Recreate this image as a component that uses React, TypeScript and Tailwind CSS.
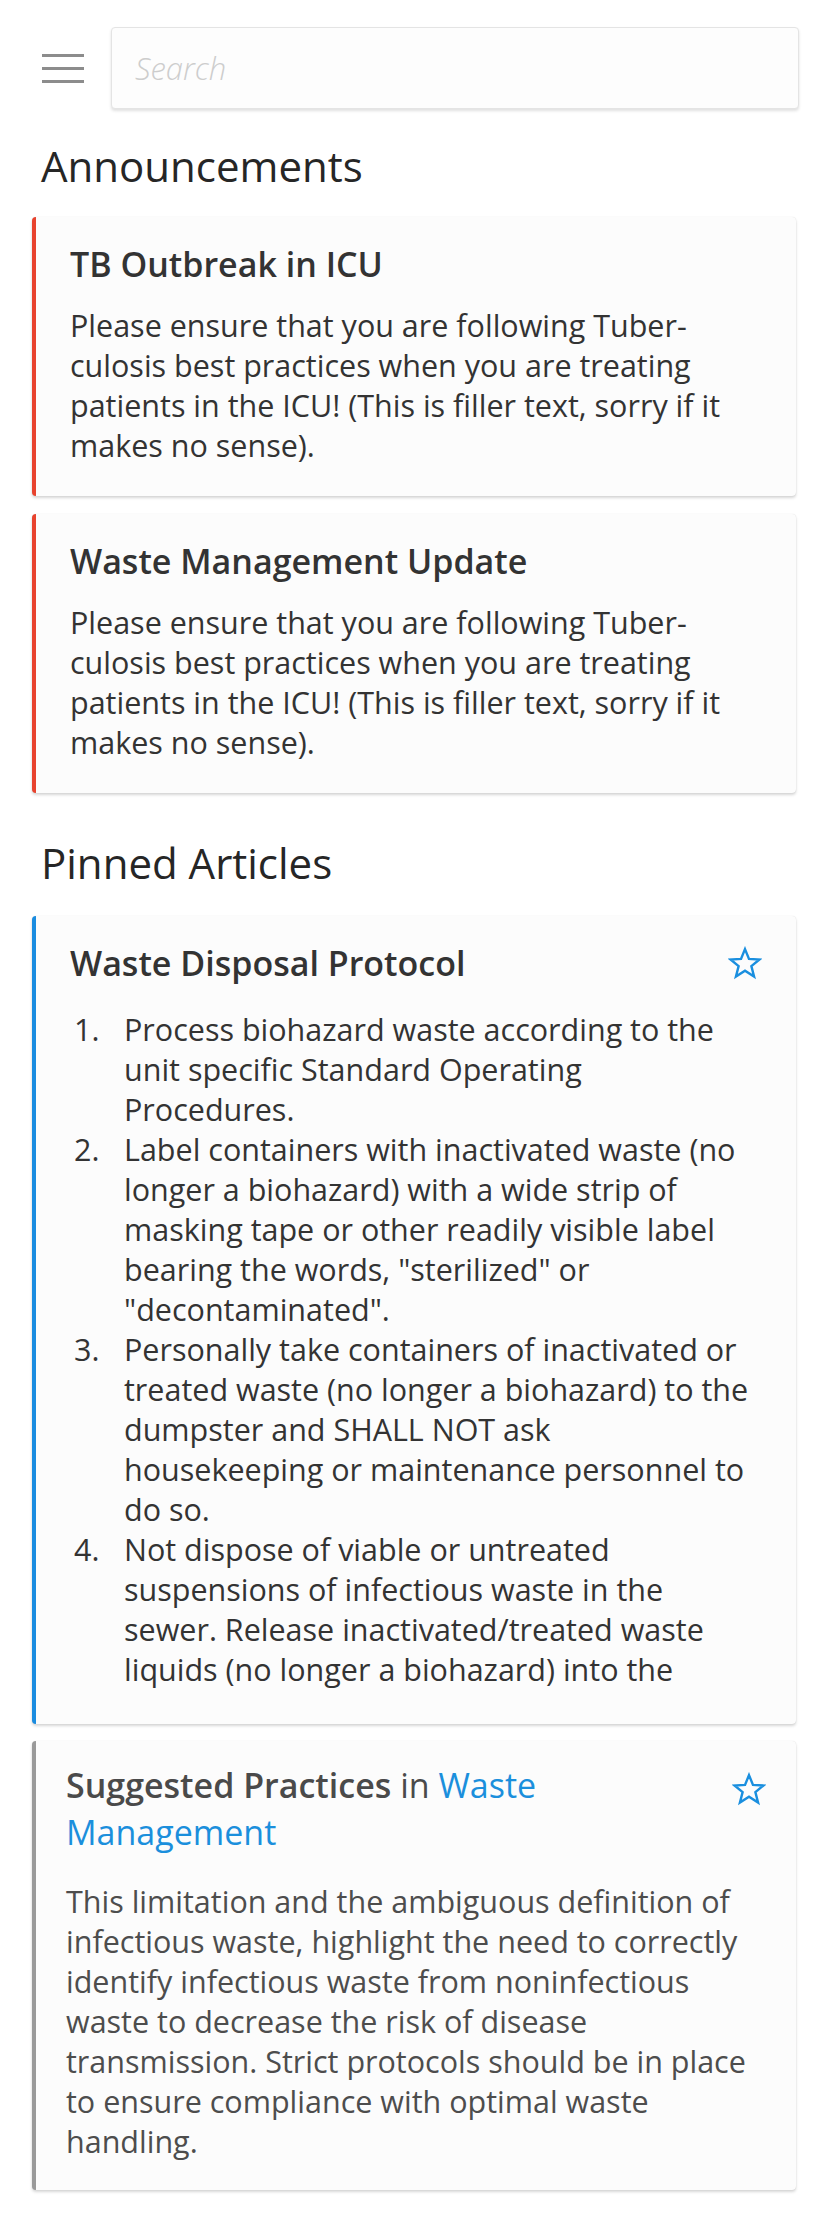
import React from "react";

function Star({ className = "" }: { className?: string }) {
  return (
    <svg
      viewBox="0 0 24 24"
      className={"h-[34px] w-[34px] shrink-0 " + className}
      fill="none"
      stroke="#1a8fdf"
      strokeWidth={1.7}
      strokeLinejoin="miter"
    >
      <polygon points="12,2.2 14.8,9.1 22.2,9.5 16.5,14.2 18.4,21.5 12,17.4 5.6,21.5 7.5,14.2 1.8,9.5 9.2,9.1" />
    </svg>
  );
}

function Announcement({ title, body }: { title: string; body: string }) {
  return (
    <div className="rounded-[4px] border-l-[4px] border-[#e8432e] bg-[#fcfcfc] pl-[34px] pr-[34px] pt-[24px] pb-[31px] shadow-[0_2px_3px_rgba(0,0,0,0.16),0_0_1px_rgba(0,0,0,0.14)]">
      <h3 className="text-[34px] font-semibold leading-[47px] text-[#333333]">{title}</h3>
      <p className="mt-[17px] text-[30.5px] leading-[40px] text-[#333333]">{body}</p>
    </div>
  );
}

const items = [
  "Process biohazard waste according to the unit specific Standard Operating Procedures.",
  'Label containers with inactivated waste (no longer a biohazard) with a wide strip of masking tape or other readily visible label bearing the words, "sterilized" or "decontaminated".',
  "Personally take containers of inactivated or treated waste (no longer a biohazard) to the dumpster and SHALL NOT ask housekeeping or maintenance personnel to do so.",
  "Not dispose of viable or untreated suspensions of infectious waste in the sewer. Release inactivated/treated waste liquids (no longer a biohazard) into the",
];

const body =
  "Please ensure that you are following Tuber\u00ADculosis best practices when you are treating patients in the ICU! (This is filler text, sorry if it makes no sense).";

export default function App() {
  return (
    <div className="min-h-screen bg-white font-['Open_Sans',sans-serif] text-[#333333]">
      <div className="px-[32px] pt-[27px] pb-[35px]">
        {/* Header */}
        <div className="ml-[10px] mr-[-3px] flex items-center gap-[27px]">
          <button className="flex w-[42px] shrink-0 flex-col gap-[10px]" aria-label="Menu">
            <span className="block h-[3px] w-full bg-[#8c8c8c]" />
            <span className="block h-[3px] w-full bg-[#8c8c8c]" />
            <span className="block h-[3px] w-full bg-[#8c8c8c]" />
          </button>
          <input
            type="text"
            placeholder="Search"
            className="h-[82px] flex-1 rounded-[4px] border border-[#e4e4e4] bg-[#fdfdfd] px-[23px] text-[31px] shadow-[0_2px_3px_rgba(0,0,0,0.12)] outline-none placeholder:font-light placeholder:italic placeholder:text-[#cdcdcd]"
          />
        </div>

        {/* Announcements */}
        <h2 className="ml-[9px] mt-[29px] text-[42px] leading-[56px] text-[#262626]">Announcements</h2>
        <div className="mt-[23px] flex flex-col gap-[18px]">
          <Announcement title="TB Outbreak in ICU" body={body} />
          <Announcement title="Waste Management Update" body={body} />
        </div>

        {/* Pinned */}
        <h2 className="ml-[9px] mt-[42px] text-[42px] leading-[56px] text-[#262626]">Pinned Articles</h2>
        <div className="mt-[25px] flex flex-col gap-[17px]">
          <div className="rounded-[4px] border-l-[4px] border-[#1a8ce0] bg-[#fcfcfc] pl-[34px] pr-[34px] pt-[24px] pb-[35px] shadow-[0_2px_3px_rgba(0,0,0,0.16),0_0_1px_rgba(0,0,0,0.14)]">
            <div className="flex items-start justify-between gap-[16px]">
              <h3 className="text-[34px] font-semibold leading-[47px] text-[#333333]">Waste Disposal Protocol</h3>
              <Star className="mt-[6px]" />
            </div>
            <ol className="mt-[22px] max-h-[680px] overflow-hidden pr-[8px] text-[30.5px] leading-[40px] text-[#333333]">
              {items.map((t, i) => (
                <li key={i} className="flex">
                  <span className="w-[54px] shrink-0 pl-[4px]">{i + 1}.</span>
                  <span>{t}</span>
                </li>
              ))}
            </ol>
          </div>

          <div className="rounded-[4px] border-l-[4px] border-[#9a9a9a] bg-[#fcfcfc] pl-[30px] pr-[30px] pt-[21px] pb-[29px] shadow-[0_2px_3px_rgba(0,0,0,0.16),0_0_1px_rgba(0,0,0,0.14)]">
            <div className="flex items-start justify-between gap-[16px]">
              <h3 className="max-w-[640px] text-[34px] leading-[47px] text-[#4a4a4a]">
                <span className="font-semibold">Suggested Practices</span> in{" "}
                <a href="#" className="text-[#1b8fdc]">
                  <span>Waste</span> <span>Management</span>
                </a>
              </h3>
              <Star className="mt-[10px]" />
            </div>
            <p className="mt-[25px] text-[30.5px] leading-[40px] text-[#4d4d4d]">
              This limitation and the ambiguous definition of infectious waste, highlight the need to correctly identify infectious waste from noninfectious waste to decrease the risk of disease transmission. Strict protocols should be in place to ensure compliance with optimal waste handling.
            </p>
          </div>
        </div>
      </div>
    </div>
  );
}
